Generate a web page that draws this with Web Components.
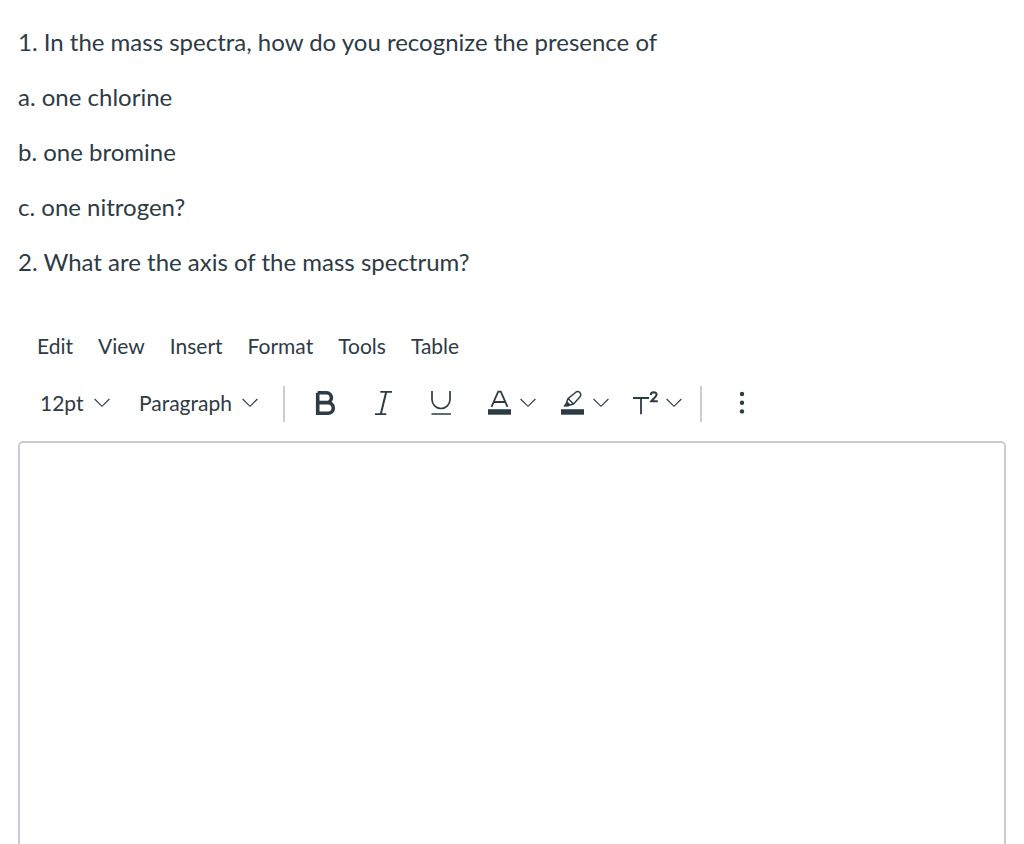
<!DOCTYPE html>
<html lang="en">
<head>
<meta charset="utf-8">
<meta name="viewport" content="width=device-width, initial-scale=1">
<title>Mass spectra quiz</title>
<style>
  body { margin: 0; background: #fff; color: #2d3b45; font-family: Lato, "Liberation Sans", sans-serif; }
</style>
</head>
<body>
<quiz-page>
  <quiz-prompt slot="prompt">
    <p>1. In the mass spectra, how do you recognize the presence of</p>
    <p>a. one chlorine</p>
    <p>b. one bromine</p>
    <p>c. one nitrogen?</p>
    <p>2. What are the axis of the mass spectrum?</p>
  </quiz-prompt>
  <rich-editor></rich-editor>
</quiz-page>

<script>
const define = (name, html) => customElements.define(name, class extends HTMLElement {
  constructor() {
    super();
    const template = document.createElement('template');
    template.innerHTML = html;
    this.attachShadow({ mode: 'open' }).append(template.content.cloneNode(true));
  }
  connectedCallback() {
    const control = this.shadowRoot.querySelector('button, select');
    if (control && this.hasAttribute('label')) {
      control.setAttribute('aria-label', this.getAttribute('label'));
    }
    const option = this.shadowRoot.querySelector('option');
    if (option) option.textContent = this.getAttribute('value');
  }
});

const chevron = `<svg width="16" height="10" viewBox="0 0 16 10" fill="none" stroke="currentColor" stroke-width="1.15" aria-hidden="true"><path d="M.6 1 8 8.3 15.4 1"/></svg>`;

define('quiz-page', `
  <style>
    :host { display: flex; flex-direction: column; box-sizing: border-box; height: 100vh; padding: 14px 18px 0; overflow: hidden; }
  </style>
  <slot name="prompt"></slot>
  <slot></slot>`);

define('quiz-prompt', `
  <style>
    :host { display: flex; flex-direction: column; font-size: 24px; line-height: 55px; }
    ::slotted(p) { margin: 0; }
  </style>
  <slot></slot>`);

define('menu-item', `
  <style>
    :host { display: block; }
    button { display: block; margin: 0; padding: 0; border: 0; background: none; color: inherit; font: inherit; cursor: pointer; }
  </style>
  <button type="button" aria-haspopup="menu"><slot></slot></button>`);

define('tool-select', `
  <style>
    :host { display: grid; align-items: center; height: 34px; padding-bottom: 2px; }
    select { grid-area: 1 / 1; appearance: none; margin: 0; padding: 0 26px 0 0; border: 0; background: none; color: inherit; font: inherit; cursor: pointer; }
    svg { grid-area: 1 / 1; justify-self: end; pointer-events: none; }
  </style>
  <select><option></option></select>${chevron}`);

define('tool-button', `
  <style>
    :host { display: block; width: 58px; }
    button { display: flex; align-items: center; justify-content: center; box-sizing: border-box; width: 100%; height: 36px; margin: 0; padding: 0 0 2px; border: 0; background: none; color: inherit; cursor: pointer; }
  </style>
  <button type="button"><slot></slot></button>`);

define('tool-menu-button', `
  <style>
    :host { display: block; }
    button { display: flex; align-items: center; gap: 8px; box-sizing: border-box; height: 36px; margin: 0; padding: 0 13px 2px 12px; border: 0; background: none; color: inherit; cursor: pointer; }
  </style>
  <button type="button" aria-haspopup="menu"><slot></slot>${chevron}</button>`);

define('tool-divider', `
  <style>:host { display: block; width: 2px; height: 36px; background: #c7cdd1; }</style>`);

define('rich-editor', `
  <style>
    :host { display: flex; flex-direction: column; padding-top: 39px; }
    nav { display: flex; gap: 25px; padding-left: 19px; font-size: 21px; line-height: 36px; }
    .toolbar { display: flex; align-items: center; margin-top: 22px; padding-left: 22px; font-size: 21px; line-height: 34px; }
    .paragraph { margin-left: 29px; }
    .marks { display: flex; margin: 0 6px 0 11px; }
    .colors { display: flex; margin-right: 5px; }
    .first { margin-left: 25px; }
    .more { margin-left: 11px; }
    textarea { display: block; box-sizing: border-box; width: 100%; height: 480px; margin: 19px 0 0; padding: 16px; border: 2px solid #c7cdd1; border-radius: 5px; background: #fff; color: inherit; font: inherit; resize: none; outline: 0; }
    svg { display: block; overflow: visible; }
  </style>
  <nav aria-label="Editor menu">
    <menu-item>Edit</menu-item><menu-item>View</menu-item><menu-item>Insert</menu-item><menu-item>Format</menu-item><menu-item>Tools</menu-item><menu-item>Table</menu-item>
  </nav>
  <div class="toolbar" role="toolbar" aria-label="Formatting">
    <tool-select label="Font size" value="12pt"></tool-select>
    <tool-select class="paragraph" label="Block style" value="Paragraph"></tool-select>
    <tool-divider class="first"></tool-divider>
    <div class="marks">
      <tool-button label="Bold"><svg width="24" height="26" viewBox="0 0 24 26" fill="none" stroke="currentColor" stroke-width="3.6"><path d="M4.7 2.8H13.5A4.9 4.9 0 0 1 13.5 12.6H4.7M13.5 12.6H15A5.3 5.3 0 0 1 15 23.2H4.7V2.8"/></svg></tool-button>
      <tool-button label="Italic"><svg width="24" height="26" viewBox="0 0 24 26" fill="none" stroke="currentColor" stroke-width="1.7"><path d="M9.3 1.9H21M4 24.1H15.3"/><path d="M15.2 2 9.8 24" stroke-width="2"/></svg></tool-button>
      <tool-button label="Underline"><svg width="24" height="26" viewBox="0 0 24 26" fill="none" stroke="currentColor" stroke-width="1.7"><path d="M3 1V9.5A9 9 0 0 0 21 9.5V1M2.5 24H22"/></svg></tool-button>
    </div>
    <div class="colors">
      <tool-menu-button label="Text color"><svg width="24" height="26" viewBox="0 0 24 26" fill="none" stroke="currentColor" stroke-width="1.8"><path d="M3.5 16.8 10.2 1.7H12.8L19.5 16.8M6.2 12H16.8"/><path d="M0 19.2H23V24.7H0Z" fill="currentColor" stroke="none"/></svg></tool-menu-button>
      <tool-menu-button label="Highlight color"><svg width="24" height="26" viewBox="0 0 24 26" fill="none" stroke="currentColor" stroke-width="1.4" stroke-linejoin="round"><path d="M7 8.6 14.8 2.2Q17 .8 18.9 2.6 20.6 4.6 19 6.8L12.6 14ZM7 8.6 5.8 12 9 15 12.6 14"/><path d="M5.6 12 2.8 16.3H7.4L9 15Z" fill="currentColor" stroke-width=".6"/><path d="M0 19.2H23V24.7H0Z" fill="currentColor" stroke="none"/></svg></tool-menu-button>
      <tool-menu-button label="Superscript and subscript"><svg width="24" height="26" viewBox="0 0 24 26" fill="none" stroke="currentColor" stroke-width="1.8"><path d="M-1 8H15M7 8V24.2" /><path d="M16.8 5C16.8 1.6 22.6 1.5 22.6 4.6 22.6 6.8 19.4 8.2 17.2 11.3H23.8" stroke-width="2"/></svg></tool-menu-button>
    </div>
    <tool-divider></tool-divider>
    <tool-button class="more" label="More"><svg width="6" height="24" viewBox="0 0 6 24" fill="currentColor"><circle cx="3" cy="3" r="2.2"/><circle cx="3" cy="11.7" r="2.2"/><circle cx="3" cy="20.4" r="2.2"/></svg></tool-button>
  </div>
  <textarea aria-label="Answer"></textarea>`);
</script>
</body>
</html>
